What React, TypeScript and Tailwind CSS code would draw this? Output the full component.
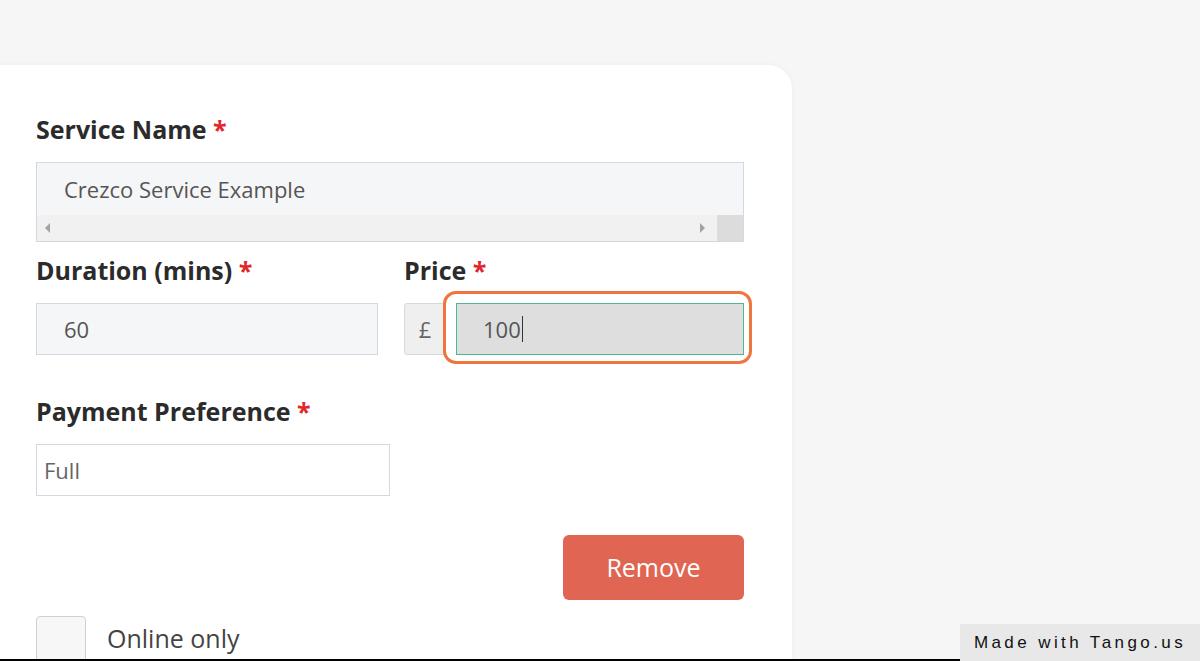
import React from "react";

const Label = ({ children }: { children: React.ReactNode }) => (
  <div className="text-[25px] leading-[30px] font-bold text-[#2b2b2b] mb-[17px] -mt-[1px] pb-[1px]">
    {children} <span className="text-[#e0262b]">*</span>
  </div>
);

export default function App() {
  return (
    <div
      className="relative h-[661px] w-[1200px] overflow-hidden bg-[#f6f6f6]"
      style={{ fontFamily: '"Open Sans", "Noto Sans", sans-serif' }}
    >
      <div className="mt-[65px] w-[792px] h-[700px] bg-white rounded-tr-[24px] shadow-[0_0_6px_rgba(0,0,0,0.04)] pl-[36px] pt-[50px]">
        <div className="w-[708px]">
          <Label>Service Name</Label>
          <div className="h-[80px] border border-[#d3d8e3] bg-[#f5f6f8] flex flex-col">
            <div className="flex-1 flex items-center pl-[27px] text-[22px] text-[#555]">
              Crezco Service Example
            </div>
            <div className="h-[26px] flex bg-[#f1f1f1]">
              <div className="flex-1 flex items-center justify-between px-[8px]">
                <svg width="6" height="10" viewBox="0 0 6 10"><path d="M5 0 L0 5 L5 10 Z" fill="#a3a3a3" /></svg>
                <svg width="6" height="10" viewBox="0 0 6 10" className="mr-[4px]"><path d="M1 0 L6 5 L1 10 Z" fill="#a3a3a3" /></svg>
              </div>
              <div className="w-[26px] bg-[#dcdcdc]" />
            </div>
          </div>

          <div className="mt-[14px] flex gap-[26px]">
            <div className="w-[342px]">
              <Label>Duration (mins)</Label>
              <div className="h-[52px] border border-[#d3d8e3] bg-[#f5f6f8] flex items-center pl-[27px] text-[22px] text-[#555]">
                60
              </div>
            </div>
            <div className="flex-1">
              <Label>Price</Label>
              <div className="flex h-[52px]">
                <div className="w-[42px] border border-[#d8d8d8] rounded-l-[3px] bg-[#efefef] flex items-center justify-center text-[22px] text-[#666]">
                  £
                </div>
                <div className="w-[10px]" />
                <div className="relative flex-1">
                  <div className="absolute left-[-13px] right-[-8px] top-[-12px] bottom-[-9px] rounded-[13px] border-[3px] border-[#f0743e]" />
                  <div className="relative h-full border border-[#4fb595] bg-[#dedede] flex items-center pl-[26px] text-[22px] text-[#555]">
                    100<span className="inline-block w-[1.5px] h-[26px] bg-[#333] ml-[1px]" />
                  </div>
                </div>
              </div>
            </div>
          </div>

          <div className="mt-[42px]">
            <Label>Payment Preference</Label>
            <div className="w-[354px] h-[52px] border border-[#d3d8e3] bg-white flex items-center pl-[7px] text-[22px] text-[#666]">
              Full
            </div>
          </div>

          <div className="mt-[39px] flex justify-end">
            <button className="w-[181px] h-[65px] rounded-[6px] bg-[#e06552] text-white text-[25px]">
              Remove
            </button>
          </div>

          <div className="mt-[16px] flex items-start gap-[21px]">
            <div className="w-[50px] h-[50px] border border-[#cfcfcf] rounded-[4px] bg-[#f7f7f7]" />
            <div className="text-[25px] text-[#444] leading-[44px]">Online only</div>
          </div>
        </div>
      </div>

      <div className="absolute left-0 bottom-0 w-[960px] h-[2px] bg-black" />
      <div
        className="absolute right-0 bottom-0 w-[240px] h-[37px] bg-[#e8e8e8] flex items-center justify-center text-[17px] tracking-[3.4px] text-[#111]"
        style={{ fontFamily: '"Liberation Sans", Arial, sans-serif' }}
      >
        Made with Tango.us
      </div>
    </div>
  );
}
